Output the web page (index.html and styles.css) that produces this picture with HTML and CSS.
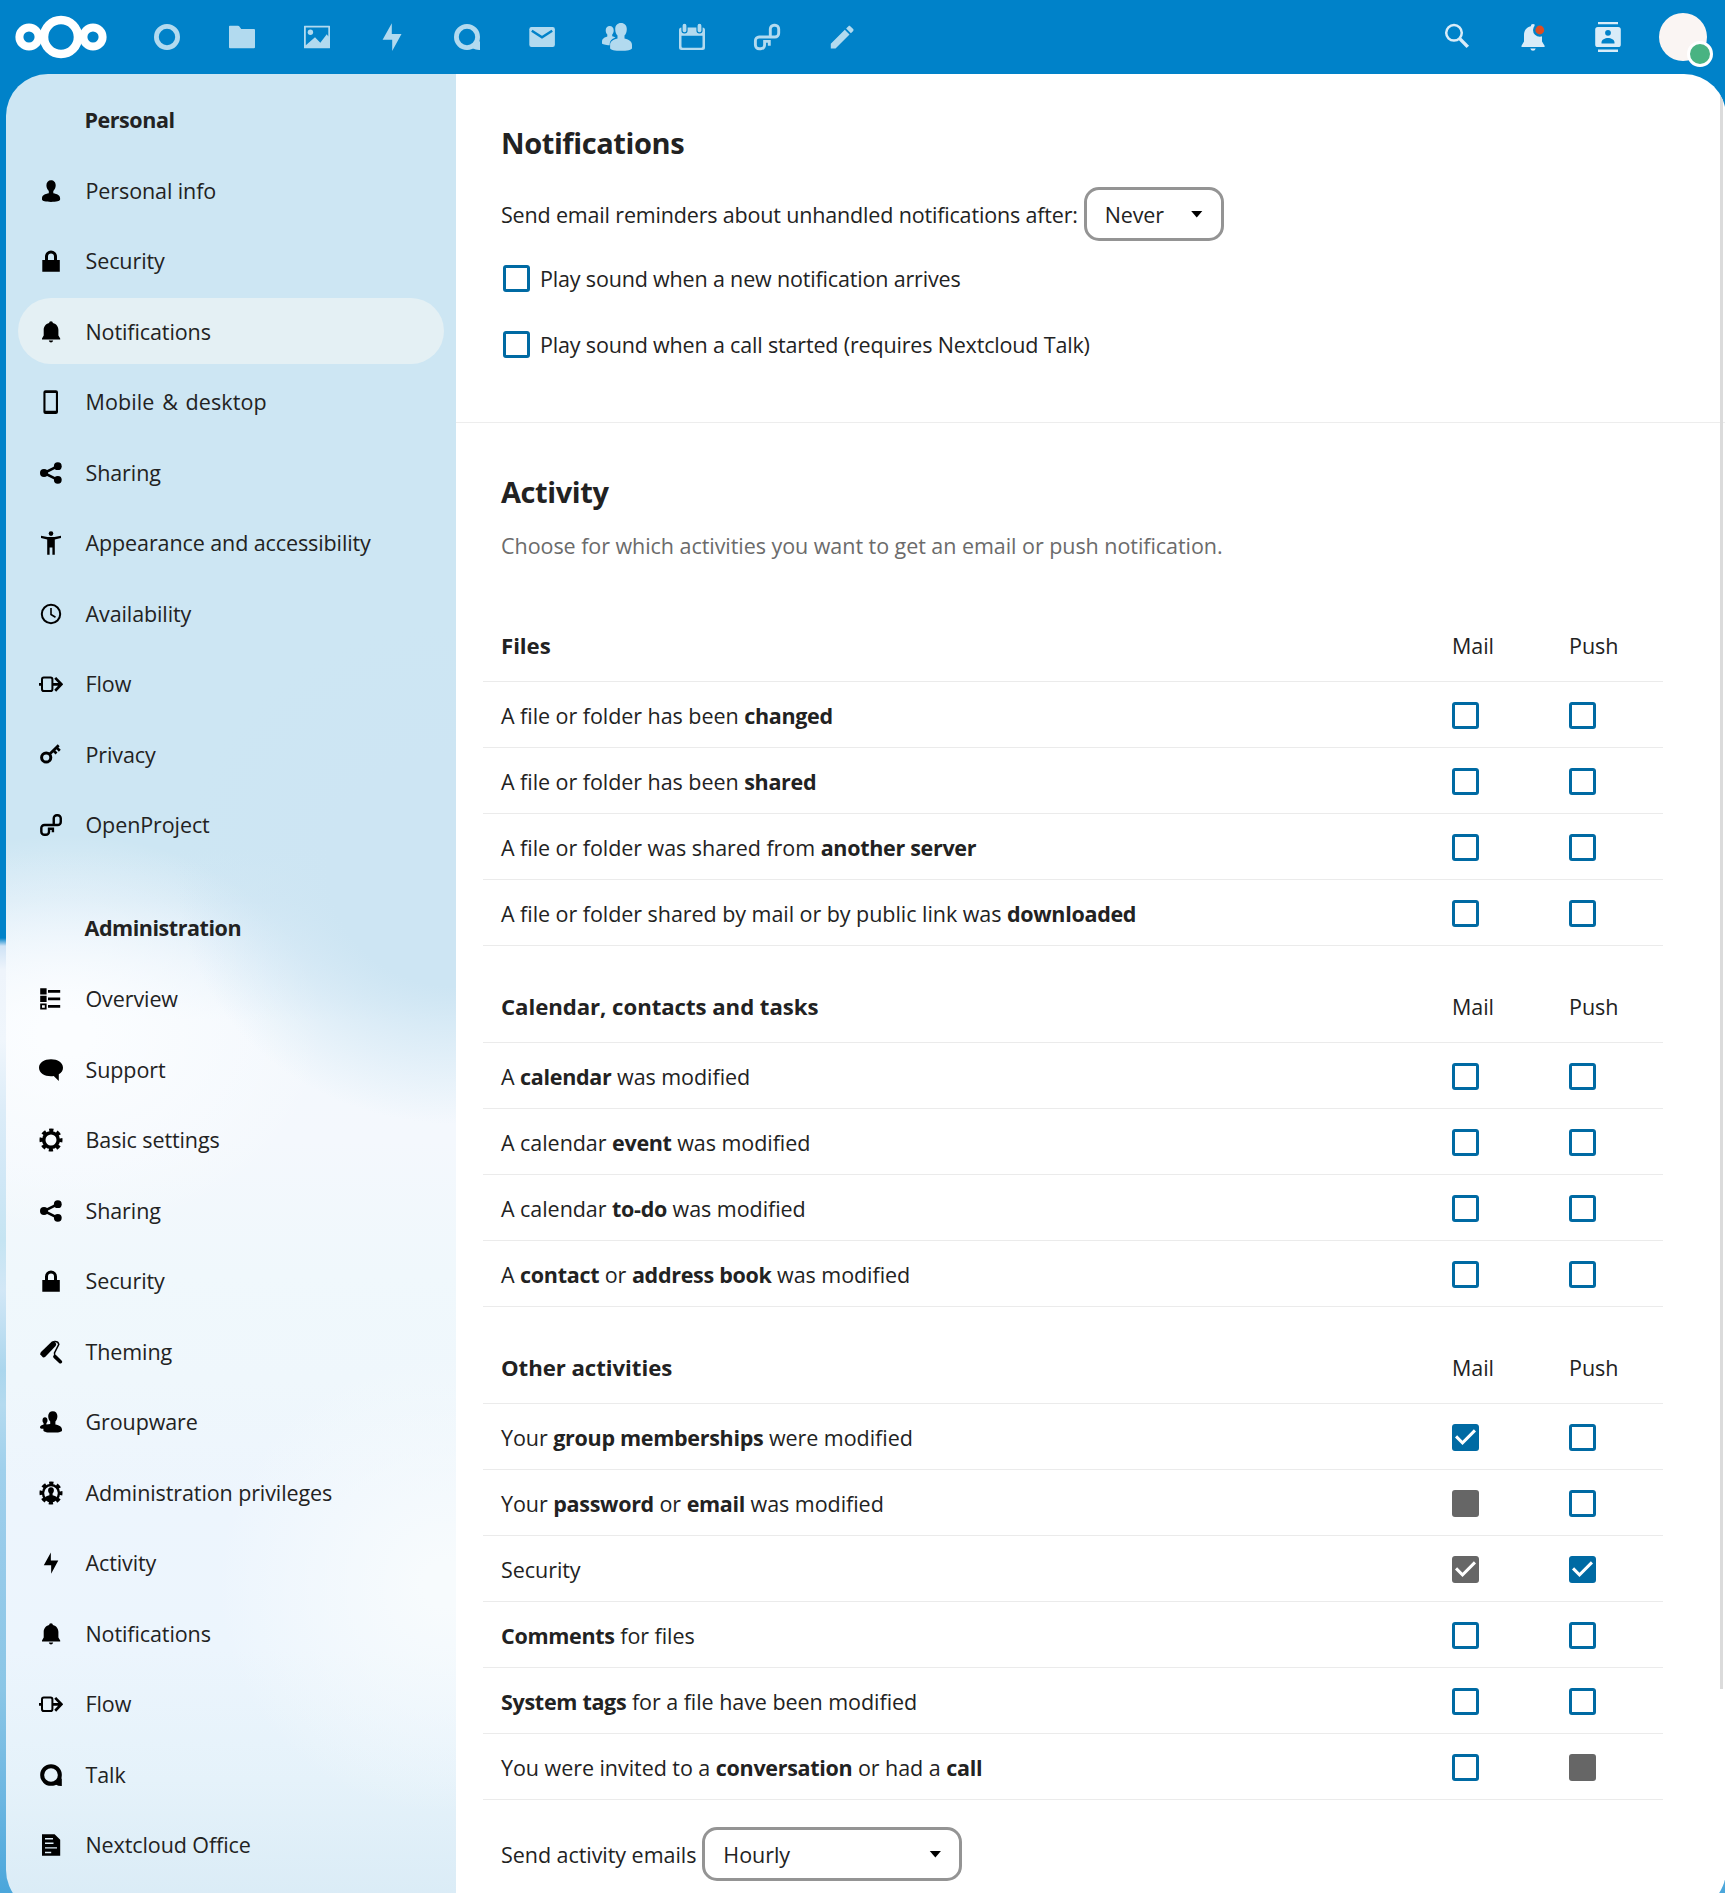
FILE: index.html
```html
<!DOCTYPE html>
<html lang="en">
<head>
<meta charset="utf-8">
<title>Notifications - Personal settings - Nextcloud</title>
<link rel="stylesheet" href="styles.css">
</head>
<body>
<svg class="sprite" aria-hidden="true">
  <symbol id="ring" viewBox="0 0 30 30"><circle cx="15" cy="15" r="10.6" fill="none" stroke="currentColor" stroke-width="4.8"/></symbol>
  <symbol id="folder" viewBox="0 0 30 30"><path d="M2.8 3.7h8.3q.7 0 1.1.5l2 2.7H27q1 0 1 1V25.3q0 .9-1 .9H3q-1 0-1-.9V4.6q0-.9.8-.9z"/></symbol>
  <symbol id="picture" viewBox="0 0 30 30"><path fill-rule="evenodd" d="M2.500 3.700h25q.5 0 .5.5v21.600q0 .5-.5.5h-25q-.5 0-.5-.5V4.200q0-.5.5-.5zM3.800 5.500V23.200L13 15.200l5.300 5.600 6.500-8.500 1.500 2.200V5.500z"/><circle cx="8.400" cy="10.300" r="2.700"/></symbol>
  <symbol id="bolt" viewBox="0 0 30 30"><path d="M14.800 1.200 5.600 17.800h9.600V29L24.500 11.900H14.800z"/></symbol>
  <symbol id="talk" viewBox="0 0 30 30"><circle cx="15" cy="15" r="10.600" fill="none" stroke="currentColor" stroke-width="4.800"/><path d="M20.500 26.300q3.500 2 7.500 1.800V19l-3 2z"/></symbol>
  <symbol id="mail" viewBox="0 0 30 30"><rect x="2.300" y="5" width="25.600" height="20" rx="2.200"/><path d="M4.800 8.700 15 15.300 25.200 8.700" fill="none" stroke="#0082c9" stroke-width="2.400"/></symbol>
  <symbol id="people" viewBox="0 0 30 30"><path d="M7.700 4c2.400 0 4 1.700 4 4.200 0 2-.6 3.400-1.500 4.300v1.700c1.200.4 2.300.7 3.300 1.300-3 1.200-5.500 2.500-5.800 6.700v1C3.500 23 0 22.300 0 21.200V19.700c0-3 2.200-4.300 5.300-5.300v-2C4.300 11.500 3.700 10.200 3.700 8.200 3.700 5.700 5.300 4 7.700 4z"/><path d="M19 1c3.500 0 5.800 2.400 5.800 6 0 3.200-1 5.200-2.300 6.600v2.800C27.500 17.600 30 19.400 30 23v3.200c0 1.700-5 2.600-11 2.600S8.100 27.900 8.100 26.200V23c0-3.600 2.400-5.400 7.400-6.600v-2.800C14.200 12.200 13.200 10.200 13.200 7c0-3.600 2.300-6 5.800-6z"/></symbol>
  <symbol id="calendar" viewBox="0 0 30 30"><path fill-rule="evenodd" d="M4.500 5.500h21q2.500 0 2.500 2.500v17.500q0 2.500-2.500 2.500h-21Q2 28 2 25.500V8q0-2.500 2.500-2.500zM4.500 13.800v10.400q0 1.500 1.500 1.500h18q1.500 0 1.500-1.500V13.800z"/><g stroke="#0082c9" stroke-width="1.200"><rect x="5" y="1.200" width="5" height="9.600" rx="2.400"/><rect x="20" y="1.200" width="5" height="9.600" rx="2.400"/></g></symbol>
  <symbol id="openproject" viewBox="0 0 30 30"><path fill="none" stroke="currentColor" stroke-width="2.900" d="M11.200 19.400h5.800M12.600 18.200V23a3.700 3.700 0 0 1-3.700 3.700H7.100A3.700 3.700 0 0 1 3.400 23v-4.300A3.700 3.700 0 0 1 7.100 15H23a3.700 3.700 0 0 0 3.700-3.700V7A3.700 3.700 0 0 0 23 3.300h-1A3.700 3.700 0 0 0 18.300 7v8M17.300 18v5.700"/></symbol>
  <symbol id="pencil" viewBox="0 0 30 30"><path transform="scale(1.265)" d="M20.710 7.040c.390-.390.390-1.040 0-1.410l-2.340-2.340c-.370-.390-1.020-.390-1.410 0l-1.840 1.830 3.750 3.750M3 17.250V21h3.750L17.810 9.930l-3.750-3.750z"/></symbol>
  <symbol id="search" viewBox="0 0 30 30"><g fill="none" stroke="currentColor"><circle cx="12" cy="10.800" r="7.800" stroke-width="2.500"/><path d="M17.700 16.600 25.800 24.900" stroke-width="3.500"/></g></symbol>
  <symbol id="bell-dot" viewBox="0 0 30 30"><path d="M15 2a2.200 2.200 0 0 1 2.200 2.200C22 5.400 24 9 24 13v6.500l2.600 4.300V25H3.500v-1.200L6 19.500V13c0-4 2-7.600 6.800-8.800A2.200 2.200 0 0 1 15 2zM12.300 26.400h5.400q-.6 2.400-2.700 2.400t-2.700-2.400z"/><circle cx="21.800" cy="8" r="6.800" fill="#0082c9"/><circle cx="21.800" cy="8" r="4.400" fill="#dc4d22"/></symbol>
  <symbol id="contacts" viewBox="0 0 30 30"><path fill-rule="evenodd" d="M5 0h20v2.300H5zM5 27.600h20V30H5zM4.800 5h20.400q2.600 0 2.600 2.600v14.800q0 2.600-2.600 2.600H4.800q-2.600 0-2.600-2.600V7.600Q2.200 5 4.800 5zM15 7.900a2.900 2.900 0 1 0 0 5.800 2.900 2.900 0 0 0 0-5.800zM8.500 21.500h13v-1c0-2.700-3.500-4.400-6.500-4.400s-6.500 1.700-6.500 4.400z"/></symbol>

  <symbol id="person" viewBox="0 0 24 24"><path d="M12 1.200c2.700 0 4.700 2 4.700 5 0 2.500-1 4.400-2.400 5.700v2.300c3.900.7 6.800 2 6.800 5v1.400c0 1.500-4 2.300-9.100 2.300s-9-.8-9-2.300v-1.400c0-3 2.900-4.300 6.800-5v-2.300C8.400 10.600 7.400 8.700 7.400 6.200c0-3 1.900-5 4.600-5z"/></symbol>
  <symbol id="lock" viewBox="0 0 24 24"><path fill-rule="evenodd" d="M6 11V7.500a6 6 0 0 1 12 0V11h2.800v11.700H3.300V11zM9 11h6V7.500a3 3 0 0 0-6 0z"/></symbol>
  <symbol id="bell" viewBox="0 0 24 24"><path d="M12 1.200a1.900 1.900 0 0 1 1.900 1.900C17.700 4 19.400 7 19.400 10v5.500l1.800 3V19.600H3v-1.100l1.700-3V10c0-3 1.700-6 5.400-6.900A1.900 1.900 0 0 1 12 1.200zM9.800 20.500h4.400q-.5 2-2.200 2t-2.200-2z"/></symbol>
  <symbol id="phone" viewBox="0 0 24 24"><path fill-rule="evenodd" d="M6.500.2h10.400q2.100 0 2.100 2.100v19.600q0 2.100-2.100 2.100H6.500q-2.100 0-2.100-2.100V2.300Q4.400.2 6.500.2zM6.500 3v17.800h10.400V3z"/></symbol>
  <symbol id="share" viewBox="0 0 24 24"><circle cx="5" cy="12" r="4"/><circle cx="18.800" cy="5.200" r="3.900"/><circle cx="18.800" cy="18.800" r="3.900"/><path d="M18.800 5.200 5 12l13.800 6.800" fill="none" stroke="currentColor" stroke-width="2.600"/></symbol>
  <symbol id="access" viewBox="0 0 24 24"><circle cx="12" cy="2.600" r="2.300"/><path d="M2 4.700 8.500 6h7L22 4.700v2.400L15.800 8.600v15.200h-2.400v-7.300h-2.800v7.300H8.200V8.600L2 7.100z"/></symbol>
  <symbol id="clock" viewBox="0 0 24 24"><g fill="none" stroke="currentColor"><circle cx="12" cy="12" r="9.200" stroke-width="2"/><path d="M12 6v6.500l4.500 2.800" stroke-width="1.600"/></g></symbol>
  <symbol id="flow" viewBox="0 0 24 24"><g fill="none" stroke="currentColor" stroke-width="2"><rect x="3" y="5.500" width="10.400" height="13.500" rx="1.800"/><path d="M0 12.300h3M13.400 12.300h8.500M16.200 5.900l6.200 6.400-6.200 6.400" stroke-width="2.700"/></g></symbol>
  <symbol id="key" viewBox="0 0 24 24"><g fill="none" stroke="currentColor"><circle cx="7.200" cy="14.500" r="4.600" stroke-width="3"/><path d="M10.500 11.300 19.700 2.300M14.500 7.500l3 3M17.500 4.400l3.300 3.300" stroke-width="2.700"/></g></symbol>
  <symbol id="overview" viewBox="0 0 24 24"><path fill-rule="evenodd" d="M1.200 1.200h6.400v6.400H1.200zM1.200 8.800h6.400v6.200H1.200zM1.200 16.400h6.400v6.200H1.200zM3 18.200v2.600h2.800v-2.600zM9 3h12.200v2.800H9zM9 10.600h12.200v2.600H9zM9 18h12.200v2.800H9z"/></symbol>
  <symbol id="chat" viewBox="0 0 24 24"><path d="M12 1.300c6.600 0 12 3.400 12 8.400 0 3-1.500 5.100-4.200 6.600v6.600L14.700 18c-.9.100-1.700.2-2.700.2-6.600 0-12-3.500-12-8.500s5.400-8.400 12-8.400z"/></symbol>
  <symbol id="gear" viewBox="0 0 24 24"><g fill="none" stroke="currentColor"><circle cx="12" cy="12" r="7.300" stroke-width="3.600"/><circle cx="12" cy="12" r="9.800" stroke-width="3.400" stroke-dasharray="4.200 3.497" stroke-dashoffset="2.100"/></g></symbol>
  <symbol id="gear-user" viewBox="0 0 24 24"><g fill="none" stroke="currentColor"><circle cx="12" cy="12" r="8" stroke-width="2.400"/><circle cx="12" cy="12" r="9.800" stroke-width="3.400" stroke-dasharray="4.200 3.497" stroke-dashoffset="2.100"/></g><path d="M12 6.200c1.800 0 2.900 1.200 2.900 3 0 1.500-.6 2.500-1.300 3.200v1.800c2.400.5 4.200 1.300 4.200 3.200-1.600 1.700-3.600 2.500-5.800 2.500s-4.200-.8-5.800-2.500c0-1.900 1.800-2.700 4.200-3.200v-1.800c-.7-.7-1.300-1.700-1.300-3.200 0-1.800 1.100-3 2.900-3z"/></symbol>
  <symbol id="group" viewBox="0 0 24 24"><path d="M13.800 1.200c2.800 0 4.600 2 4.600 4.900 0 2.500-.8 4.200-2 5.500v2.800c4 .8 6.600 2.400 6.600 5.200v.8c0 1.500-4.300 2.200-9.200 2.200s-9.400-.7-9.400-2.200v-1.700H2.500C1.600 18.500 1 18 1 17.200c0-1.500 1.800-2.300 3.600-2.700v-1.300C3.900 12.500 3.500 11.600 3.500 10.300c0-1.900 1-3.100 2.500-3.100s2.500 1.200 2.500 3.100c0 1.300-.4 2.200-1.100 2.900v1.400l3.800-.5v-2.500C10 10.300 9.200 8.600 9.200 6.100c0-2.900 1.800-4.900 4.600-4.900z"/></symbol>
  <symbol id="roller" viewBox="0 0 24 24"><path d="M1.300 14.600Q1 13.200 2 12L12.600 1.800Q14 .6 15.400 1.200L17 3.400Q17.600 4.800 16.600 6L6.600 16.400Q5.200 17.700 3.800 17.300z"/><path d="M15.200 1.500q4-.4 4.600 2.800L15.500 13l.3 3" fill="none" stroke="currentColor" stroke-width="1.500"/><path d="M16 16.600 21.300 21.700" fill="none" stroke="currentColor" stroke-width="3.600" stroke-linecap="round"/></symbol>
  <symbol id="doc" viewBox="0 0 24 24"><path fill-rule="evenodd" d="M3 1.200h12.600l5.600 5.600v16H3zM6 5v1.400h8V5zM6 9.600V11h8.500V9.600zM6 14.200v1.400h12v-1.400zM6 18.800v1.400h6.200v-1.400z"/></symbol>

  <symbol id="box" viewBox="3 3 18 18"><path d="M19 3H5C3.890 3 3 3.890 3 5v14a2 2 0 0 0 2 2h14a2 2 0 0 0 2-2V5c0-1.110-.900-2-2-2m0 2v14H5V5z"/></symbol>
  <symbol id="box-filled" viewBox="3 3 18 18"><rect x="3" y="3" width="18" height="18" rx="2"/></symbol>
  <symbol id="box-checked" viewBox="3 3 18 18"><path fill-rule="evenodd" d="M10 17 5 12l1.410-1.420L10 14.170l7.590-7.590L19 8M19 3H5c-1.110 0-2 .890-2 2v14a2 2 0 0 0 2 2h14a2 2 0 0 0 2-2V5c0-1.110-.900-2-2-2z"/></symbol>
</svg>

<header class="header">
  <svg class="logo" viewBox="0 0 92 44"><g fill="none" stroke="#fff"><circle cx="46" cy="22" r="17" stroke-width="8.600"/><circle cx="14" cy="22" r="9.600" stroke-width="8"/><circle cx="78" cy="22" r="9.600" stroke-width="8"/></g></svg>
  <nav class="apps">
    <svg><use href="#ring"/></svg><svg><use href="#folder"/></svg><svg><use href="#picture"/></svg><svg><use href="#bolt"/></svg><svg><use href="#talk"/></svg><svg><use href="#mail"/></svg><svg><use href="#people"/></svg><svg><use href="#calendar"/></svg><svg><use href="#openproject"/></svg><svg><use href="#pencil"/></svg>
  </nav>
  <div class="tools">
    <svg><use href="#search"/></svg><svg><use href="#bell-dot"/></svg><svg><use href="#contacts"/></svg>
    <div class="avatar"><span class="status"></span></div>
  </div>
</header>

<div class="container">
  <aside class="sidebar">
    <h3 class="caption"><span>Personal</span></h3>
    <ul class="menu">
      <li><svg><use href="#person"/></svg><span>Personal info</span></li>
      <li><svg><use href="#lock"/></svg><span>Security</span></li>
      <li class="active"><svg><use href="#bell"/></svg><span>Notifications</span></li>
      <li><svg><use href="#phone"/></svg><span class="wide">Mobile &amp; desktop</span></li>
      <li><svg><use href="#share"/></svg><span>Sharing</span></li>
      <li><svg><use href="#access"/></svg><span>Appearance and accessibility</span></li>
      <li><svg><use href="#clock"/></svg><span>Availability</span></li>
      <li><svg><use href="#flow"/></svg><span>Flow</span></li>
      <li><svg><use href="#key"/></svg><span>Privacy</span></li>
      <li><svg viewBox="0 0 24 24"><use href="#openproject" width="25" height="25" x="-.5" y="-.5"/></svg><span>OpenProject</span></li>
    </ul>
    <h3 class="caption admin"><span>Administration</span></h3>
    <ul class="menu">
      <li><svg><use href="#overview"/></svg><span>Overview</span></li>
      <li><svg><use href="#chat"/></svg><span>Support</span></li>
      <li><svg><use href="#gear"/></svg><span>Basic settings</span></li>
      <li><svg><use href="#share"/></svg><span>Sharing</span></li>
      <li><svg><use href="#lock"/></svg><span>Security</span></li>
      <li><svg><use href="#roller"/></svg><span>Theming</span></li>
      <li><svg><use href="#group"/></svg><span>Groupware</span></li>
      <li><svg><use href="#gear-user"/></svg><span>Administration privileges</span></li>
      <li><svg viewBox="0 0 24 24"><use href="#bolt" width="23" height="23" x=".5" y=".5"/></svg><span>Activity</span></li>
      <li><svg><use href="#bell"/></svg><span>Notifications</span></li>
      <li><svg><use href="#flow"/></svg><span>Flow</span></li>
      <li><svg viewBox="0 0 24 24"><use href="#talk" width="25" height="25" x="-.5" y="-.5"/></svg><span>Talk</span></li>
      <li><svg><use href="#doc"/></svg><span>Nextcloud Office</span></li>
    </ul>
  </aside>

  <main class="content">
    <section class="notifications">
      <h2>Notifications</h2>
      <div class="field"><span>Send email reminders about unhandled notifications after:</span><button class="select never"><span>Never</span></button></div>
      <label class="option"><svg class="check"><use href="#box"/></svg><span>Play sound when a new notification arrives</span></label>
      <label class="option"><svg class="check"><use href="#box"/></svg><span>Play sound when a call started (requires Nextcloud Talk)</span></label>
    </section>
    <section class="activity">
      <h2>Activity</h2>
      <p class="hint">Choose for which activities you want to get an email or push notification.</p>
      <div class="grid">
        <div class="row head"><b>Files</b><span>Mail</span><span>Push</span></div>
        <div class="row"><span>A file or folder has been <b>changed</b></span><svg class="check"><use href="#box"/></svg><svg class="check"><use href="#box"/></svg></div>
        <div class="row"><span>A file or folder has been <b>shared</b></span><svg class="check"><use href="#box"/></svg><svg class="check"><use href="#box"/></svg></div>
        <div class="row"><span>A file or folder was shared from <b>another server</b></span><svg class="check"><use href="#box"/></svg><svg class="check"><use href="#box"/></svg></div>
        <div class="row"><span>A file or folder shared by mail or by public link was <b>downloaded</b></span><svg class="check"><use href="#box"/></svg><svg class="check"><use href="#box"/></svg></div>

        <div class="row head"><b>Calendar, contacts and tasks</b><span>Mail</span><span>Push</span></div>
        <div class="row"><span>A <b>calendar</b> was modified</span><svg class="check"><use href="#box"/></svg><svg class="check"><use href="#box"/></svg></div>
        <div class="row"><span>A calendar <b>event</b> was modified</span><svg class="check"><use href="#box"/></svg><svg class="check"><use href="#box"/></svg></div>
        <div class="row"><span>A calendar <b>to-do</b> was modified</span><svg class="check"><use href="#box"/></svg><svg class="check"><use href="#box"/></svg></div>
        <div class="row"><span>A <b>contact</b> or <b>address book</b> was modified</span><svg class="check"><use href="#box"/></svg><svg class="check"><use href="#box"/></svg></div>

        <div class="row head"><b>Other activities</b><span>Mail</span><span>Push</span></div>
        <div class="row"><span>Your <b>group memberships</b> were modified</span><svg class="check"><use href="#box-checked"/></svg><svg class="check"><use href="#box"/></svg></div>
        <div class="row"><span>Your <b>password</b> or <b>email</b> was modified</span><svg class="check disabled"><use href="#box-filled"/></svg><svg class="check"><use href="#box"/></svg></div>
        <div class="row"><span>Security</span><svg class="check disabled"><use href="#box-checked"/></svg><svg class="check"><use href="#box-checked"/></svg></div>
        <div class="row"><span><b>Comments</b> for files</span><svg class="check"><use href="#box"/></svg><svg class="check"><use href="#box"/></svg></div>
        <div class="row"><span><b>System tags</b> for a file have been modified</span><svg class="check"><use href="#box"/></svg><svg class="check"><use href="#box"/></svg></div>
        <div class="row"><span>You were invited to a <b>conversation</b> or had a <b>call</b></span><svg class="check"><use href="#box"/></svg><svg class="check disabled"><use href="#box-filled"/></svg></div>
      </div>
      <div class="field frequency"><span>Send activity emails</span><button class="select hourly"><span>Hourly</span></button></div>
    </section>
    <div class="scrollbar"></div>
  </main>
</div>
</body>
</html>
```
FILE: styles.css
```css
* {
  box-sizing: border-box;
}

html {
  height: 100%;
  overflow: hidden;
}

body {
  margin: 0;
  height: 100%;
  overflow: hidden;
  font-family: "Open Sans", "Noto Sans", sans-serif;
  font-size: 21.5px;
  line-height: 30px;
  letter-spacing: -0.3px;
  color: #222;
  background: linear-gradient(#0082c9 938px, #cfe3f6 946px, #eef4fb 970px, #f0f6fc 1040px, #dcecf8 1110px,
    #d0e7f6 1180px, #c5e4f2 1240px, #d2e7f6 1290px, #abd6ed 1370px, #b4daef 1405px, #a0d0ec 1470px,
    #98cbea 1550px, #8bc6e6 1690px, #6cb6e1 1800px, #4aa6db 1893px);
}

ul, h2, h3, p {
  margin: 0;
  padding: 0;
  list-style: none;
}

svg {
  display: block;
  fill: currentColor;
}

.sprite {
  position: absolute;
  width: 0;
  height: 0;
}

/* Header */
.header {
  height: 74px;
  display: flex;
  align-items: center;
  padding-left: 15px;
}

.logo {
  width: 92px;
  height: 44px;
  margin-top: -1px;
}

.apps {
  display: flex;
  gap: 45px;
  margin-left: 45px;
  color: #b2daef;
}

.apps svg,
.tools > svg {
  width: 30px;
  height: 30px;
}

.tools {
  display: flex;
  align-items: center;
  margin-left: auto;
  margin-right: 18px;
  color: #d9ecf8;
}

.tools > svg {
  margin-right: 45.5px;
}

.avatar {
  position: relative;
  width: 48px;
  height: 48px;
  margin-left: -9.5px;
  border-radius: 50%;
  background: #faf5f3;
}

.status {
  position: absolute;
  left: 28px;
  top: 28px;
  width: 26px;
  height: 26px;
  border: 3px solid #fff;
  border-radius: 50%;
  background: #49b382;
}

/* Page frame */
.container {
  position: relative;
  display: flex;
  width: 1720px;
  height: 1838px;
  margin-left: 6px;
  border-radius: 42px;
  overflow: hidden;
}

.sidebar {
  width: 450px;
  padding: 12px;
  background:
    radial-gradient(ellipse 280px 250px at 450px 800px, #cde5f3 45%, rgba(205, 229, 243, 0) 100%),
    radial-gradient(ellipse 230px 230px at 440px 1510px, #f7fbfd 10%, rgba(247, 251, 253, 0) 100%),
    radial-gradient(ellipse 260px 200px at 60px 960px, #fbfdff 10%, rgba(251, 253, 255, 0) 100%),
    linear-gradient(#cde6f3 776px, #d3e8f5 826px, #e4f0fa 886px, #f3f8fd 946px, #f4f8fd 1066px,
      #f0f8fc 1200px, #eff7fc 1306px, #edf5fd 1426px, #ecf5fd 1576px, #e5f2fa 1706px, #d9ebf6 1838px);
}

.caption {
  height: 66px;
  display: flex;
  align-items: center;
  padding: 1px 0 0 66.5px;
  font-size: 21.5px;
  font-weight: 700;
  letter-spacing: -0.45px;
}

.caption.admin {
  margin-top: 37.5px;
}

.menu li {
  height: 66px;
  display: flex;
  align-items: center;
  margin-top: 4.5px;
  padding: 1px 0 0 21px;
  border-radius: 33px;
  letter-spacing: -0.1px;
}

.menu li.active {
  background: #e4f0f4;
}

.menu li span {
  margin-top: 1.5px;
}

.menu .wide {
  word-spacing: 2px;
  letter-spacing: 0.1px;
}

.menu svg {
  width: 24px;
  height: 24px;
  margin-top: 1px;
  margin-right: 22.5px;
  color: #000;
  overflow: visible;
}

/* Content */
.content {
  flex: 1;
  background: #fff;
}

h2 {
  height: 40px;
  line-height: 40px;
  font-size: 29px;
  font-weight: 700;
  letter-spacing: -0.4px;
}

.notifications {
  padding: 49px 45px 45px;
  border-bottom: 1px solid #ededed;
  letter-spacing: -0.17px;
}

.activity {
  padding: 49px 63px 0 27px;
  letter-spacing: -0.05px;
}

.activity h2,
.activity .hint,
.activity .field {
  margin-left: 18px;
}

.field {
  display: flex;
  align-items: center;
  height: 54px;
  margin-top: 24px;
}

.field > span {
  padding-top: 1px;
}

.select {
  display: flex;
  align-items: center;
  justify-content: space-between;
  height: 54px;
  padding: 1px 18px 0 18px;
  border: 3px solid #949494;
  border-radius: 15px;
  background: #fff;
  color: #222;
  font: inherit;
  letter-spacing: inherit;
}

.select::after {
  content: "";
  width: 12px;
  height: 7px;
  margin-top: -1px;
  background: #000;
  clip-path: polygon(0 0, 100% 0, 50% 100%);
}

.never {
  width: 140px;
  margin-left: 6px;
}

.hourly {
  width: 260px;
  margin-left: 6px;
}

.option {
  display: flex;
  align-items: center;
  height: 66px;
  padding-left: 1.5px;
}

.field + .option {
  margin-top: 4px;
}

.option span {
  margin-left: 10.5px;
  padding-top: 1px;
}

.check {
  width: 27px;
  height: 27px;
  color: #006aa3;
}

.check.disabled {
  color: #666;
}

.hint {
  margin-top: 19px;
  color: #6b6b6b;
}

.grid {
  margin-top: 24px;
}

.row {
  display: grid;
  grid-template-columns: 1fr 117px 94px;
  align-items: center;
  height: 66px;
  padding-left: 18px;
  border-bottom: 1px solid #ebebeb;
}

.row > span {
  padding-top: 2px;
}

.row .check {
  margin-top: 1px;
}

.row span b {
  letter-spacing: -0.3px;
}

.row.head {
  height: 97px;
  align-items: end;
  padding-bottom: 20px;
}

.row.head > b {
  font-size: 22.2px;
}

.frequency {
  margin-top: 27px;
}

.scrollbar {
  position: absolute;
  right: 3.5px;
  top: 6px;
  width: 2.5px;
  height: 1609px;
  background: #dbdbdb;
}
```
